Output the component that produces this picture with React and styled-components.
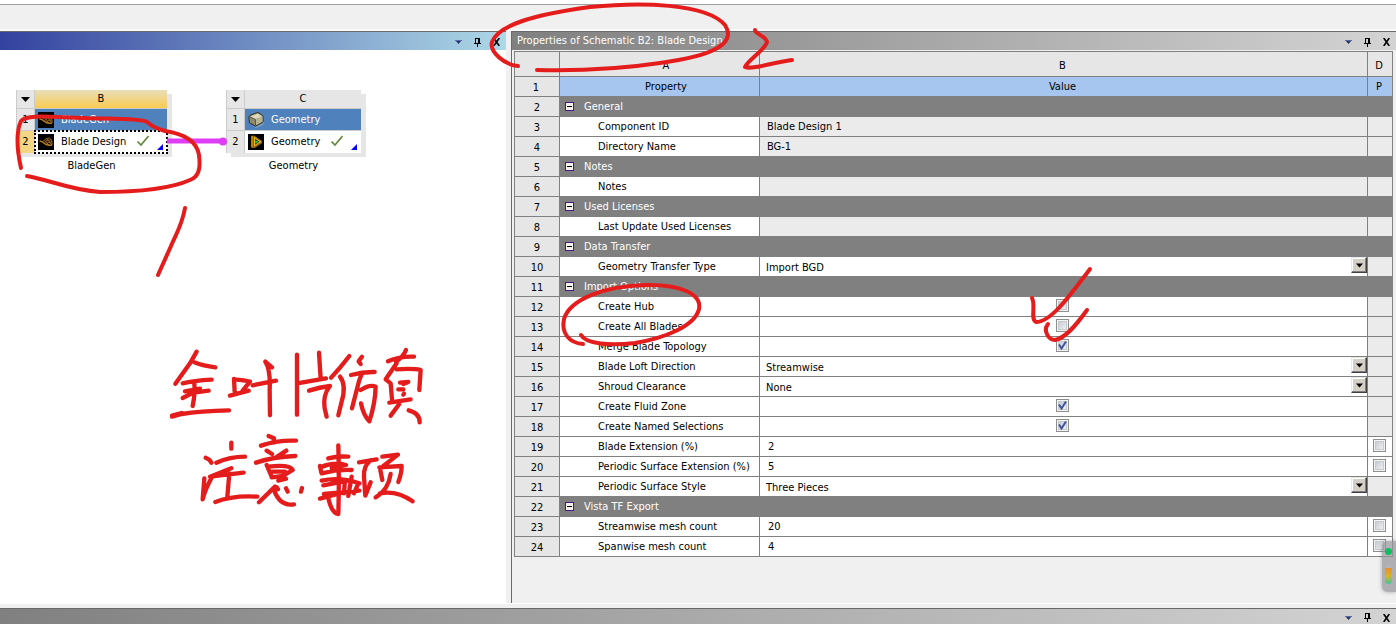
import React from "react";
import styled, { createGlobalStyle } from "styled-components";

const Global = createGlobalStyle`
  * { box-sizing: border-box; }
  html, body { height: 100%; margin: 0; }
  #root { height: 100%; }
  body {
    background: #f0f0f0;
    color: #000;
    font: 11px/16px "DejaVu Sans Condensed", "DejaVu Sans", sans-serif;
  }
`;

const Page = styled.div`
  position: relative;
  display: flex;
  flex-direction: column;
  min-height: 100vh;
  overflow: hidden;
`;

const Toolbar = styled.div`
  height: 31px;
  border-top: 4px solid #fff;
  border-bottom: 2px solid #fafafa;
  box-shadow: inset 0 1px 0 #a0a0a0;
  background: #f0f0f0;
`;

const Workspace = styled.main`
  display: flex;
  flex: 1;
  gap: 5px;
`;

const Pane = styled.section`
  flex: ${(p) => (p.$fixed ? "0 0 auto" : "1 1 0")};
  width: ${(p) => (p.$fixed ? "506px" : "auto")};
  min-width: 0;
  display: flex;
  flex-direction: column;
  border-left: ${(p) => (p.$fixed ? "0" : "1px solid #696969")};
  background: ${(p) => (p.$fixed ? "#fff" : "#f0f0f0")};
`;

const tones = {
  active: "linear-gradient(90deg, #33429f, #add8e6)",
  idle: "linear-gradient(90deg, #808080, #d3d3d3)",
};

const TitleBar = styled.header`
  display: flex;
  align-items: center;
  height: ${(p) => (p.$short ? "16px" : "19px")};
  padding: 0 2px 0 5px;
  border-top: 1px solid #696969;
  background: ${(p) => tones[p.$tone]};
  color: #fff;
`;

const Title = styled.h2`
  flex: 1;
  margin: 0;
  font: inherit;
`;

const BarButtons = styled.div`
  display: flex;
  gap: 4px;
  margin-left: auto;
  padding-top: 2px;
`;

const IconButton = styled.button`
  display: grid;
  place-items: center;
  width: 15px;
  height: 16px;
  padding: 0;
  border: 0;
  background: none;
`;

const TableWrap = styled.div`
  padding: 1px 3px 0 2px;
`;

const Grid = styled.table`
  width: 100%;
  table-layout: fixed;
  border-collapse: collapse;
  th, td {
    height: 20px;
    padding: 0;
    border: 1px solid #808080;
    font-weight: normal;
  }
  thead th { padding-right: 2px; }
`;

const Column = styled.col`
  width: ${(p) => p.$w}px;
`;

const LetterRow = styled.tr`
  background: #e6e6e6;
  && th { height: 25px; padding-top: 4px; }
`;

const HeadRow = styled.tr`
  background: #a6c6ef;
`;

const ColumnTitle = styled.th`
  && { padding-left: 15px; }
`;

const Num = styled.th`
  background: #e6e6e6;
  text-align: center;
  && { padding-top: 2px; }
`;

const GroupCell = styled.td`
  background: #808080;
  color: #fff;
`;

const GroupLine = styled.div`
  display: flex;
  align-items: center;
  gap: 10px;
  padding-left: 5px;
`;

const Toggle = styled.button`
  display: grid;
  place-items: center;
  width: 9px;
  height: 9px;
  padding: 0;
  border: 1px solid #4b1a80;
  background: #f4f0ee;
  &::after { content: ""; width: 5px; height: 1px; background: #000; }
`;

const Label = styled.td`
  background: #fff;
  white-space: nowrap;
  && { padding-left: 38px; }
`;

const Value = styled.td`
  background: ${(p) => (p.$locked ? "#ebebeb" : "#fff")};
`;

const ReadOnly = styled.div`
  padding-left: 7px;
`;

const TextBox = styled.input`
  display: block;
  width: 100%;
  height: 18px;
  padding: 0 8px;
  border: 0;
  background: transparent;
  font: inherit;
`;

const SelectBox = styled.div`
  display: grid;
  grid-template-columns: 1fr 16px;
  align-items: start;
`;

const Select = styled.select`
  appearance: none;
  grid-area: 1 / 1 / 2 / 3;
  width: 100%;
  height: 19px;
  padding: 2px 6px 0;
  border: 0;
  background: transparent;
  color: #000;
  font: inherit;
`;

const SelectArrow = styled.span`
  grid-area: 1 / 2;
  display: grid;
  place-items: center;
  width: 16px;
  height: 16px;
  border: 1px solid;
  border-color: #e8e8e8 #404040 #404040 #e8e8e8;
  box-shadow: inset -1px -1px 0 #808080, inset 1px 1px 0 #fff;
  background: #d4d0c8;
  pointer-events: none;
`;

const Check = styled.input`
  appearance: none;
  display: block;
  width: 13px;
  height: 13px;
  margin: 0;
  border: 1px solid #8e8f8f;
  background-color: #e4e6ea;
  background-image: linear-gradient(135deg, #bcc1cb, #fafafa);
  box-shadow: inset 0 0 0 1px #f4f4f4, inset 0 0 0 2px #c6c9ce;
`;

const CheckHolder = styled.label`
  display: grid;
  justify-content: center;
  align-items: center;
  padding: 0 2px 2px 0;
  > * { grid-area: 1 / 1; }
  svg { pointer-events: none; justify-self: center; }
`;

const Splitter = styled.div`
  height: 5px;
  flex: none;
  border-top: 1px solid #fff;
  background: #f0f0f0;
`;

/* Schematic canvas */

const Canvas = styled.div`
  position: relative;
  flex: 1;
`;

const System = styled.div`
  position: absolute;
  left: ${(p) => p.$x}px;
  top: 40px;
  width: ${(p) => p.$w}px;
`;

const Block = styled.div`
  display: grid;
  grid-template-columns: 17px 1fr;
  grid-template-rows: 18px 21px 22px;
  gap: 1px;
  padding-left: 1px;
  background: #cbcbcb;
  box-shadow: 5px 4px 0 #e6e6e6;
`;

const MenuButton = styled.button`
  display: grid;
  place-items: center;
  padding: 0;
  border: 0;
  background: #e6e6e6;
`;

const SysHead = styled.div`
  text-align: center;
  line-height: 18px;
  background: ${(p) => (p.$on ? "linear-gradient(#e8deba, #fbcb51)" : "#e6e6e6")};
`;

const Index = styled.div`
  display: grid;
  place-items: center;
  background: ${(p) => (p.$on ? "#f3d583" : "#e6e6e6")};
`;

const Cell = styled.div`
  position: relative;
  display: flex;
  align-items: center;
  padding-left: 3px;
  gap: 7px;
  color: ${(p) => (p.$title ? "#fff" : "#000")};
  background: ${(p) => (p.$title ? "#4f81bd" : "#fff")};
  outline: ${(p) => (p.$on ? "2px dotted #000" : "0")};
  outline-offset: -1px;
  white-space: nowrap;
  > svg { flex: none; }
`;

const Corner = styled.i`
  position: absolute;
  right: 4px;
  bottom: 3px;
  border: 3px solid;
  border-color: transparent #00f #00f transparent;
`;

const Status = styled.span`
  position: absolute;
  right: 18px;
  top: 4px;
  line-height: 0;
`;

const Caption = styled.div`
  margin-top: 5px;
  text-align: center;
`;

const Overlay = styled.svg`
  position: absolute;
  left: 0;
  top: 0;
  pointer-events: none;
`;

const Meter = styled.aside`
  position: absolute;
  right: 0;
  top: 541px;
  width: 14px;
  height: 51px;
  padding: 7px 0 5px 3px;
  border-radius: 5px 0 0 5px;
  background: rgba(150, 150, 155, 0.72);
  box-shadow: 0 0 4px rgba(0, 0, 0, 0.3);
`;

const MeterDot = styled.div`
  width: 7px;
  height: 7px;
  border-radius: 50%;
  background: #0abf5f;
`;

const MeterBar = styled.div`
  width: 7px;
  height: 19px;
  margin-top: 10px;
  border-top: 3px solid #b4b4b8;
  border-radius: 3px 3px 4px 4px;
  background: linear-gradient(#f08b2c, #d6b429 50%, #3dc8a0);
`;

const Down = ({ w = 9 }) => (
  <svg width={w} height="5" viewBox="0 0 9 5" aria-hidden="true">
    <path d="M0 0h9L4.500 5z" fill="#000" />
  </svg>
);

const WindowButtons = () => (
  <BarButtons>
    <IconButton aria-label="Window menu">
      <svg width="7" height="4" viewBox="0 0 7 4">
        <path d="M0 0h7v1H0z" fill="#5a68b8" />
        <path d="M1 1h5L3.500 4z" fill="#26315f" />
      </svg>
    </IconButton>
    <IconButton aria-label="Pin">
      <svg width="7" height="9" viewBox="0 0 7 9" fill="#000" shapeRendering="crispEdges">
        <path d="M1 0h5v5h1v1H4v3H3V6H0V5h1zM2 1v4h2V1z" fillRule="evenodd" />
      </svg>
    </IconButton>
    <IconButton aria-label="Close">
      <svg width="7" height="8" viewBox="0 0 7 8">
        <path d="M.7 0l5.600 8M6.300 0L.7 8" stroke="#000" strokeWidth="1.600" />
      </svg>
    </IconButton>
  </BarButtons>
);

const BladeIcon = () => (
  <svg width="16" height="16" viewBox="0 0 16 16" aria-hidden="true">
    <path fill="#000" d="M0 0h16v16H0z" />
    <g fill="none" stroke="#b57c1c">
      <path d="M1.500 7c2 0 3.500 1 5 2.500s4 2 7.500 1.500" strokeWidth="1.400" />
      <path d="M5 7.500c2-2.500 4-3.500 6.500-3.500 2 1 2.800 4 2.500 7M6.500 8.800c1.500-2 3.500-3 6.200-2.800M8.500 10.200c1.300-1.700 2.500-2.200 5-2.200M9 5l4.500 5.500M7 6.500l4 4.500" strokeWidth=".9" />
    </g>
  </svg>
);

const BoxIcon = () => (
  <svg width="16" height="16" viewBox="0 0 16 16" aria-hidden="true">
    <path d="M2 12l5 3.500 8-4 1-2.500v2l-1 2-7.500 3z" fill="#8fa5bd" />
    <path d="M.8 5L2 3.300 9 .7l2 .2L15 4v6l-7.500 4L1.500 11z" fill="#8f8a6c" stroke="#35321f" />
    <path d="M2 4.500L9.500 1.500 14.500 4.200 7.500 7.300z" fill="#dcd8bc" />
    <path d="M7.500 7.500v6l7-3.700V4.300z" fill="#b8b393" />
    <path d="M7.500 7.500v6M2 5l5.500 2.500" stroke="#5c583e" fill="none" />
  </svg>
);

const GeometryIcon = () => (
  <svg width="16" height="16" viewBox="0 0 16 16" aria-hidden="true">
    <path fill="#000" d="M0 0h16v16H0z" />
    <path d="M3 2l3-.5L14 7v2l-7.500 5-3.500-.5z" fill="#b87f0c" />
    <path d="M5.500 2l8.500 5.700-8.500 5.500z" fill="#f0b81f" stroke="#5c3d04" strokeWidth=".6" />
    <path d="M7 4.700l4.300 3L7 10.700z" fill="#151005" />
    <path d="M7.300 6l3 1.700-3 2.100z" fill="#26d45c" />
  </svg>
);

const StatusTick = () => (
  <svg width="12" height="12" viewBox="0 0 12 12" aria-label="Up to date">
    <path d="M.5 6.500L4 10 11.500 1" fill="none" stroke="#668a3a" strokeWidth="1.700" />
  </svg>
);

function SchematicSystem({ x, width, letter, name, item, active, icons }) {
  const [First, Second] = icons;
  return (
    <System $x={x} $w={width}>
      <Block>
        <MenuButton aria-label={`System ${letter} menu`}><Down /></MenuButton>
        <SysHead $on={active}>{letter}</SysHead>
        <Index>1</Index>
        <Cell $title><First />{name}</Cell>
        <Index $on={active}>2</Index>
        <Cell $on={active}><Second />{item}<Status><StatusTick /></Status><Corner /></Cell>
      </Block>
      <Caption>{name}</Caption>
    </System>
  );
}

const rows = [
  { group: "General" },
  { label: "Component ID", text: "Blade Design 1" },
  { label: "Directory Name", text: "BG-1" },
  { group: "Notes" },
  { label: "Notes", text: "" },
  { group: "Used Licenses" },
  { label: "Last Update Used Licenses", text: "" },
  { group: "Data Transfer" },
  { label: "Geometry Transfer Type", select: "Import BGD" },
  { group: "Import Options" },
  { label: "Create Hub", check: false },
  { label: "Create All Blades", check: false },
  { label: "Merge Blade Topology", check: true },
  { label: "Blade Loft Direction", select: "Streamwise" },
  { label: "Shroud Clearance", select: "None" },
  { label: "Create Fluid Zone", check: true },
  { label: "Create Named Selections", check: true },
  { label: "Blade Extension (%)", input: "2" },
  { label: "Periodic Surface Extension (%)", input: "5" },
  { label: "Periodic Surface Style", select: "Three Pieces" },
  { group: "Vista TF Export" },
  { label: "Streamwise mesh count", input: "20" },
  { label: "Spanwise mesh count", input: "4" },
];

function CheckBox({ label, on }) {
  const [checked, setChecked] = React.useState(!!on);
  return (
    <CheckHolder>
      <Check type="checkbox" aria-label={label} checked={checked} onChange={() => setChecked(!checked)} />
      {checked && (
        <svg width="9" height="9" viewBox="0 0 9 9">
          <path d="M1 3.500L3.500 7.500 8 .5" fill="none" stroke="#3f559c" strokeWidth="2" />
        </svg>
      )}
    </CheckHolder>
  );
}

function PropertyRow({ row, n }) {
  if (row.group) {
    return (
      <tr>
        <Num scope="row">{n}</Num>
        <GroupCell colSpan={3}>
          <GroupLine><Toggle aria-label={`Collapse ${row.group}`} />{row.group}</GroupLine>
        </GroupCell>
      </tr>
    );
  }
  return (
    <tr>
      <Num scope="row">{n}</Num>
      <Label>{row.label}</Label>
      <Value $locked={row.text !== undefined}>
        {row.text !== undefined && <ReadOnly>{row.text}</ReadOnly>}
        {row.input && <TextBox aria-label={row.label} defaultValue={row.input} />}
        {row.select && (
          <SelectBox>
            <Select aria-label={row.label} defaultValue={row.select}><option>{row.select}</option></Select>
            <SelectArrow><Down w={7} /></SelectArrow>
          </SelectBox>
        )}
        {row.check !== undefined && <CheckBox label={row.label} on={row.check} />}
      </Value>
      <Value $locked={!row.input}>
        {row.input && <CheckBox label={`Parameterize ${row.label}`} />}
      </Value>
    </tr>
  );
}

const markStrokes = [
  "M21 168C17 150 16 132 21 121C27 114 50 117 85 118C110 119 140 118 147 122C153 127 156 128 165 131C185 134 197 142 199 155C201 170 198 177 190 180C170 189 135 192 100 192C70 190 50 180 27 176",
  "M185 208C182 225 177 232 171 246L158 275",
  "M518 66C505 65 489 52 492 42C498 26 530 15 590 7C640 2 706 3 725 25C737 44 712 56 660 63C620 69 580 71 537 70",
  "M755 30C755 34 766 36 767 42C765 50 748 60 745 67C752 70 770 63 792 60",
  "M583 344C569 343 561 333 564 319C570 299 605 286 645 285C680 284 702 294 699 309C695 326 665 338 635 343C610 346 586 344 581 335",
  "M1032 298C1036 305 1030 319 1036 322C1050 322 1066 301 1090 269",
  "M1048 324C1043 330 1048 340 1055 340C1066 338 1077 324 1087 310",
];

/* Handwritten note, drawn on a grid three times finer than the page */
const noteStrokes = [
  "M140 65L120 100 76 161M133 97Q160 108 196 112M98 160Q130 152 185 149M98 204L130 188 176 182M105 184L150 176M133 160Q136 190 128 228M66 260L95 252Q150 243 237 241M66 257L95 249",
  "M252 147L254 185M252 148Q285 150 300 155L278 182M240 197L296 182M308 166L378 152M366 112L346 95Q362 120 359 180L360 256",
  "M441 74V254M441 160L528 145M507 68L512 145M477 182Q510 172 540 168Q518 195 524 235L530 260",
  "M598 78Q570 115 543 143M570 140Q590 165 575 215L565 256M636 80L626 94 632 102M603 135Q640 125 674 126M637 128L628 150 606 235M632 180Q660 162 677 170Q676 220 658 274Q640 255 633 220",
  "M768 60Q760 80 738 95M714 94Q750 78 792 80M740 100L707 148 722 160 726 208M740 118Q790 115 812 120L808 180M750 158L775 156 760 162M745 178L760 178M762 191L760 194M718 218L782 208M748 222L722 257M776 241Q810 250 809 277",
  "M244 338V356M167 383Q180 388 184 398M199 398Q240 380 285 380M244 415L180 440 281 428M238 430L232 500M163 445L158 508Q165 480 184 445M196 516Q250 495 322 500",
  "M356 318L372 325 370 338M333 347Q380 330 438 332M350 362L366 372M409 362L375 384M318 398Q370 380 436 378M350 405L365 440M355 410Q420 402 428 420L395 440M368 425L405 425M365 442L400 438M385 452L408 446M375 470L327 517M372 480Q390 530 432 523M380 472L384 478M408 475L413 485M456 474L453 485",
  "M565 346Q568 450 565 552Q545 550 535 505M535 385Q560 378 595 380M510 408L514 428M512 412Q550 395 588 405L545 415M515 430Q560 418 605 420M515 452Q570 440 628 460M520 466L605 450M522 492L628 482M510 506L600 482M605 440L595 498M625 460L612 490M585 450L582 490",
  "M627 397L680 388M662 391Q640 408 642 440L646 497 662 457M697 380L744 374 700 408M688 412L755 408Q755 430 745 456M690 415L697 450M722 432Q715 480 677 502M690 490Q740 480 788 514",
];

export default function App() {
  return (
    <>
      <Global />
      <Page>
        <Toolbar />
        <Workspace>
          <Pane $fixed>
            <TitleBar $tone="active"><WindowButtons /></TitleBar>
            <Canvas>
              <SchematicSystem x={16} width={151} letter="B" name="BladeGen" item="Blade Design" active icons={[BladeIcon, BladeIcon]} />
              <SchematicSystem x={226} width={135} letter="C" name="Geometry" item="Geometry" icons={[BoxIcon, GeometryIcon]} />
              <Overlay width="506" height="130" aria-hidden="true">
                <path d="M167 91H224" stroke="#dd3df5" strokeWidth="5" />
                <circle cx="223" cy="91.500" r="4" fill="#dd3df5" />
              </Overlay>
            </Canvas>
          </Pane>
          <Pane>
            <TitleBar $tone="idle">
              <Title>Properties of Schematic B2: Blade Design</Title>
              <WindowButtons />
            </TitleBar>
            <TableWrap>
              <Grid>
                <colgroup>
                  <Column $w={45} /><Column $w={200} /><col /><Column $w={25} />
                </colgroup>
                <thead>
                  <LetterRow><th /><ColumnTitle>A</ColumnTitle><th>B</th><th>D</th></LetterRow>
                  <HeadRow><Num scope="row">1</Num><ColumnTitle>Property</ColumnTitle><th>Value</th><th>P</th></HeadRow>
                </thead>
                <tbody>
                  {rows.map((row, i) => <PropertyRow key={i} row={row} n={i + 2} />)}
                </tbody>
              </Grid>
            </TableWrap>
          </Pane>
        </Workspace>
        <Splitter />
        <TitleBar as="footer" $tone="idle" $short><WindowButtons /></TitleBar>
        <Meter><MeterDot /><MeterBar /></Meter>
        <Overlay width="1396" height="624" fill="none" stroke="#e51c1c" strokeWidth="4" strokeLinecap="round" strokeLinejoin="round" aria-hidden="true">
          {markStrokes.map((d) => <path key={d} d={d} />)}
          <g transform="translate(150 330) scale(.3333)" strokeWidth="13">
            {noteStrokes.map((d) => <path key={d} d={d} />)}
          </g>
        </Overlay>
      </Page>
    </>
  );
}
